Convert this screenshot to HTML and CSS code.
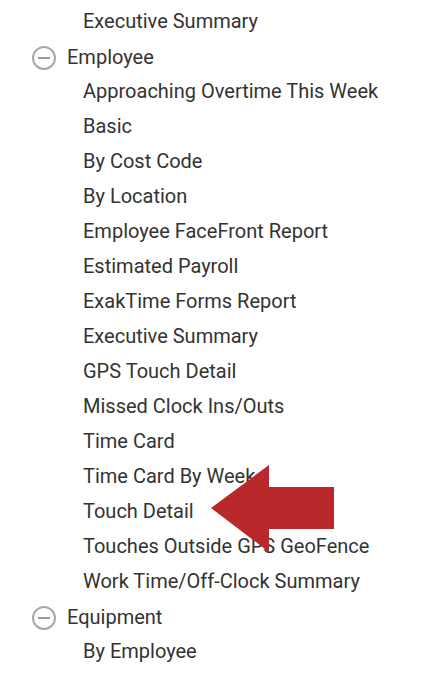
FILE: index.html
```html
<!DOCTYPE html>
<html lang="en">
  <head>
    <meta charset="UTF-8" />
    <meta name="viewport" content="width=device-width, initial-scale=1.0" />
    <title>Reports</title>
    <link rel="stylesheet" href="styles.css">
  </head>
  <body>
    <div class="report-tree">
      <ul class="children">
        <li>Executive Summary</li>
      </ul>

      <div class="group">
        <span class="toggle"></span>
        <span class="group-name">Employee</span>
      </div>
      <ul class="children">
        <li>Approaching Overtime This Week</li>
        <li>Basic</li>
        <li>By Cost Code</li>
        <li>By Location</li>
        <li>Employee FaceFront Report</li>
        <li>Estimated Payroll</li>
        <li>ExakTime Forms Report</li>
        <li>Executive Summary</li>
        <li>GPS Touch Detail</li>
        <li>Missed Clock Ins/Outs</li>
        <li>Time Card</li>
        <li>Time Card By Week</li>
        <li>Touch Detail</li>
        <li>Touches Outside GPS GeoFence</li>
        <li>Work Time/Off-Clock Summary</li>
      </ul>

      <div class="group">
        <span class="toggle"></span>
        <span class="group-name">Equipment</span>
      </div>
      <ul class="children">
        <li>By Employee</li>
      </ul>

      <!-- callout arrow pointing at Touch Detail -->
      <svg class="callout-arrow" width="124" height="88" viewBox="0 0 124 88">
        <polygon points="0,43 58,0 58,22 123,22 123,64 58,64 58,87" fill="#b9292b" />
      </svg>
    </div>
  </body>
</html>
```

FILE: styles.css
```css
* {
  margin: 0;
  padding: 0;
  box-sizing: border-box;
}

body {
  font-family: Roboto, "Liberation Sans", sans-serif;
  font-size: 20px;
  color: #333333;
  background: #ffffff;
}

.report-tree {
  position: relative;
  padding-top: 4px;
}

.children {
  list-style: none;
  padding-left: 83px;
}

.children li {
  height: 35px;
  line-height: 35px;
  white-space: nowrap;
}

.group {
  display: flex;
  align-items: center;
  height: 35px;
  padding-left: 32px;
  gap: 11px;
}

.toggle {
  width: 24px;
  height: 24px;
  border: 2px solid #a8a8a8;
  border-radius: 50%;
  display: flex;
  align-items: center;
  justify-content: center;
  margin-top: 3px;
}

.toggle::before {
  content: "";
  width: 12px;
  height: 2px;
  background: #999999;
}

.callout-arrow {
  position: absolute;
  left: 211px;
  top: 465px;
}
```
